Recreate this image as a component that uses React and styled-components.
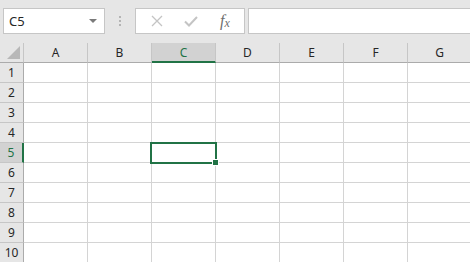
import React from "react";
import styled, { createGlobalStyle } from "styled-components";

const GlobalStyle = createGlobalStyle`
  html, body { margin: 0; padding: 0; background: #ffffff; }
  body { font-family: "Noto Sans", "Open Sans", sans-serif; overflow: hidden; }
`;

const columns = ["A", "B", "C", "D", "E", "F", "G"];
const rows = [1, 2, 3, 4, 5, 6, 7, 8, 9, 10];
const activeCol = "C";
const activeRow = 5;

const App = () => {
  return (
    <Sheet>
      <GlobalStyle />
      <Toolbar>
        <NameBox>
          <span>C5</span>
          <Caret />
        </NameBox>
        <Grip>
          <i />
          <i />
          <i />
        </Grip>
        <Actions>
          <ActionIcon>
            <svg width="14" height="14" viewBox="0 0 14 14">
              <path d="M2 2 L12 12 M12 2 L2 12" stroke="#c4c4c4" strokeWidth="1.3" fill="none" />
            </svg>
          </ActionIcon>
          <ActionIcon>
            <svg width="16" height="14" viewBox="0 0 16 14">
              <path d="M2 7.5 L6 11.5 L14 3" stroke="#c4c4c4" strokeWidth="2" fill="none" />
            </svg>
          </ActionIcon>
          <Fx>
            f<sub>x</sub>
          </Fx>
        </Actions>
        <FormulaInput />
      </Toolbar>

      <Grid>
        <Corner>
          <svg width="13" height="13" viewBox="0 0 13 13">
            <polygon points="13,0 13,13 0,13" fill="#b8b8b8" />
          </svg>
        </Corner>
        {columns.map((c) => (
          <ColHeader key={c} $active={c === activeCol}>
            {c}
          </ColHeader>
        ))}
        {rows.map((r) => (
          <React.Fragment key={r}>
            <RowHeader $active={r === activeRow}>{r}</RowHeader>
            {columns.map((c) => (
              <Cell key={c + r}>
                {c === activeCol && r === activeRow && (
                  <Selection>
                    <Handle />
                  </Selection>
                )}
              </Cell>
            ))}
          </React.Fragment>
        ))}
      </Grid>
    </Sheet>
  );
};

const Sheet = styled.div`
  width: 470px;
  height: 262px;
  overflow: hidden;
  background: #ffffff;
`;

const Toolbar = styled.div`
  display: flex;
  align-items: center;
  height: 43px;
  padding: 0 0 1px 3px;
  box-sizing: border-box;
  background: #e6e6e6;
`;

const NameBox = styled.div`
  display: flex;
  align-items: center;
  justify-content: space-between;
  width: 102px;
  height: 26px;
  box-sizing: border-box;
  padding: 0 5px 0 5px;
  background: #ffffff;
  border: 1px solid #c6c6c6;
  font-size: 13px;
  color: #262626;
`;

const Caret = styled.div`
  width: 0;
  height: 0;
  border-left: 4px solid transparent;
  border-right: 4px solid transparent;
  border-top: 4px solid #7a7a7a;
  margin-right: 2px;
`;

const Grip = styled.div`
  display: flex;
  flex-direction: column;
  gap: 2px;
  width: 30px;
  align-items: center;
  i {
    display: block;
    width: 2px;
    height: 2px;
    background: #b4b4b4;
  }
`;

const Actions = styled.div`
  display: flex;
  align-items: center;
  justify-content: space-around;
  width: 110px;
  height: 26px;
  box-sizing: border-box;
  padding: 0 2px 0 4px;
  background: #ffffff;
  border: 1px solid #c6c6c6;
`;

const ActionIcon = styled.div`
  width: 24px;
  display: flex;
  justify-content: center;
`;

const Fx = styled.div`
  width: 24px;
  text-align: center;
  font-family: "Liberation Serif", serif;
  font-style: italic;
  font-size: 16px;
  color: #6e6e6e;
  sub {
    font-size: 12px;
    vertical-align: -1px;
  }
`;

const FormulaInput = styled.div`
  flex: 1;
  height: 26px;
  margin-left: 3px;
  box-sizing: border-box;
  background: #ffffff;
  border: 1px solid #c6c6c6;
  border-right: none;
`;

const Grid = styled.div`
  display: grid;
  grid-template-columns: 24px repeat(7, 64px);
  grid-auto-rows: 20px;
`;

const Corner = styled.div`
  display: flex;
  align-items: flex-end;
  justify-content: flex-end;
  padding: 0 3px 3px 0;
  background: #e6e6e6;
  border-right: 1px solid #c6c6c6;
  border-bottom: 1px solid #ababab;
  box-sizing: border-box;
`;

const ColHeader = styled.div`
  display: flex;
  align-items: center;
  justify-content: center;
  box-sizing: border-box;
  font-size: 12px;
  background: ${(p) => (p.$active ? "#d2d2d2" : "#e6e6e6")};
  color: ${(p) => (p.$active ? "#217346" : "#262626")};
  border-right: 1px solid #c6c6c6;
  border-bottom: ${(p) => (p.$active ? "2px solid #217346" : "1px solid #ababab")};
`;

const RowHeader = styled.div`
  display: flex;
  align-items: center;
  justify-content: center;
  box-sizing: border-box;
  font-size: 12px;
  background: ${(p) => (p.$active ? "#d2d2d2" : "#e6e6e6")};
  color: ${(p) => (p.$active ? "#217346" : "#262626")};
  border-right: ${(p) => (p.$active ? "2px solid #217346" : "1px solid #ababab")};
  border-bottom: 1px solid #c6c6c6;
`;

const Cell = styled.div`
  position: relative;
  box-sizing: border-box;
  border-right: 1px solid #d4d4d4;
  border-bottom: 1px solid #d4d4d4;
`;

const Selection = styled.div`
  position: absolute;
  left: -2px;
  top: -1px;
  width: 67px;
  height: 22px;
  box-sizing: border-box;
  border: 2px solid #217346;
  z-index: 2;
`;

const Handle = styled.div`
  position: absolute;
  right: -4px;
  bottom: -4px;
  width: 5px;
  height: 5px;
  background: #217346;
  border: 1px solid #ffffff;
`;

export default App;
